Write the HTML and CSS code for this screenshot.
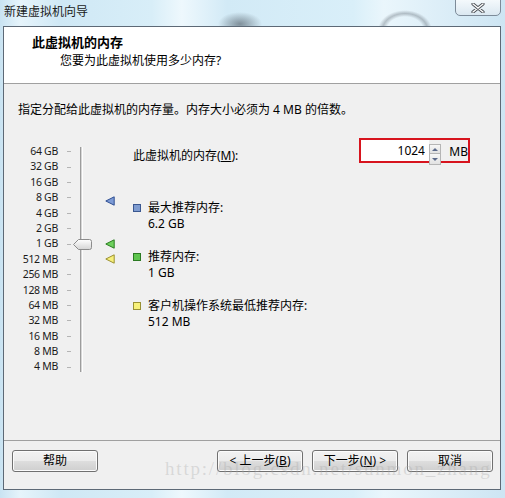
FILE: index.html
```html
<!DOCTYPE html>
<html lang="zh-CN">
<head>
    <meta charset="UTF-8">
    <title>新建虚拟机向导</title>
    <link rel="stylesheet" href="styles.css">
</head>
<body>
<div class="window">
    <div class="titlebar">
        <span class="title">新建虚拟机向导</span>
        <button class="close" title="关闭">
            <svg width="14" height="10" viewBox="0 0 14 10">
                <path d="M2 1 L12 9 M12 1 L2 9" stroke="#4a4f55" stroke-width="3.2" stroke-linecap="round"/>
                <path d="M2 1 L12 9 M12 1 L2 9" stroke="#ffffff" stroke-width="1.4" stroke-linecap="round"/>
            </svg>
        </button>
    </div>

    <div class="client">
        <!-- wizard header -->
        <div class="header">
            <h1>此虚拟机的内存</h1>
            <p>您要为此虚拟机使用多少内存?</p>
        </div>

        <div class="content">
            <p class="intro">指定分配给此虚拟机的内存量。内存大小必须为 4 MB 的倍数。</p>

            <div class="main">
                <div class="scale">
                    <span class="lbl">64 GB</span>
                    <span class="lbl">32 GB</span>
                    <span class="lbl">16 GB</span>
                    <span class="lbl">8 GB</span>
                    <span class="lbl">4 GB</span>
                    <span class="lbl">2 GB</span>
                    <span class="lbl">1 GB</span>
                    <span class="lbl">512 MB</span>
                    <span class="lbl">256 MB</span>
                    <span class="lbl">128 MB</span>
                    <span class="lbl">64 MB</span>
                    <span class="lbl">32 MB</span>
                    <span class="lbl">16 MB</span>
                    <span class="lbl">8 MB</span>
                    <span class="lbl">4 MB</span>

                    <div class="ticks">
                        <i></i><i></i><i></i><i></i><i></i><i></i><i></i><i></i>
                        <i></i><i></i><i></i><i></i><i></i><i></i><i></i>
                    </div>
                    <div class="track"></div>
                    <svg class="thumb" width="19" height="11" viewBox="0 0 19 11">
                        <defs>
                            <linearGradient id="tg" x1="0" y1="0" x2="0" y2="1">
                                <stop offset="0" stop-color="#ffffff"/>
                                <stop offset="1" stop-color="#d4d4d4"/>
                            </linearGradient>
                        </defs>
                        <path d="M0.5 5.5 L5.5 0.5 H16.5 Q18.5 0.5 18.5 2.5 V8.5 Q18.5 10.5 16.5 10.5 H5.5 Z" fill="url(#tg)" stroke="#8c8c8c"/>
                    </svg>
                    <svg class="marker max" width="10" height="10" viewBox="0 0 10 10">
                        <path d="M0.8 5 L9.2 0.8 V9.2 Z" fill="#7d9bd6" stroke="#2f4f92" stroke-linejoin="round"/>
                    </svg>
                    <svg class="marker rec" width="10" height="10" viewBox="0 0 10 10">
                        <path d="M0.8 5 L9.2 0.8 V9.2 Z" fill="#6fd15e" stroke="#2a7d20" stroke-linejoin="round"/>
                    </svg>
                    <svg class="marker min" width="10" height="10" viewBox="0 0 10 10">
                        <path d="M0.8 5 L9.2 0.8 V9.2 Z" fill="#f7f07a" stroke="#9a9030" stroke-linejoin="round"/>
                    </svg>
                </div>

                <div class="panel">
                    <div class="memrow">
                        <label for="memSize">此虚拟机的内存(<u>M</u>):</label>
                        <div class="membox">
                            <input type="text" id="memSize" value="1024">
                            <div class="spin">
                                <span class="up"></span>
                                <span class="down"></span>
                            </div>
                            <span class="unit">MB</span>
                        </div>
                    </div>

                    <div class="legend">
                        <div class="item">
                            <span class="swatch blue"></span>
                            <div>最大推荐内存:<br>6.2 GB</div>
                        </div>
                        <div class="item">
                            <span class="swatch green"></span>
                            <div>推荐内存:<br>1 GB</div>
                        </div>
                        <div class="item">
                            <span class="swatch yellow"></span>
                            <div>客户机操作系统最低推荐内存:<br>512 MB</div>
                        </div>
                    </div>
                </div>
            </div>
        </div>

        <div class="footer">
            <button class="btn help">帮助</button>
            <button class="btn">&lt; 上一步(<u>B</u>)</button>
            <button class="btn">下一步(<u>N</u>) &gt;</button>
            <button class="btn">取消</button>
            <span class="watermark">http://blog.csdn.net/sunmon_zhang</span>
        </div>
    </div>
</div>
</body>
</html>
```

FILE: styles.css
```css
body {
    margin: 0;
    font-family: "Noto Sans", "Noto Sans CJK SC", sans-serif;
    font-size: 12px;
    color: #000;
}
.window {
    width: 505px;
    height: 498px;
    box-sizing: border-box;
    padding: 0 4px 0 3px;
    display: flex;
    flex-direction: column;
    background:
        radial-gradient(ellipse 22px 12px at 240px 24px, rgba(60, 70, 80, 0.55), rgba(60, 70, 80, 0) 100%),
        radial-gradient(ellipse 30px 22px at 405px 30px, rgba(255, 255, 255, 0) 60%, rgba(80, 90, 100, 0.35) 75%, rgba(255, 255, 255, 0) 90%),
        linear-gradient(to right, #c9e3f2 0%, #e6f4fb 4%, #cfe8f5 12%, #d8eef8 30%, #eef8fd 36%, #d2eaf6 45%, #d9eff9 70%, #eaf6fc 76%, #cde5f3 100%);
}
.titlebar {
    height: 26px;
    display: flex;
    justify-content: space-between;
    align-items: flex-start;
}
.title {
    padding: 4px 0 0 1px;
    line-height: 16px;
    color: #1a1a1a;
}
.close {
    width: 46px;
    height: 17px;
    margin-top: -1px;
    padding: 0;
    border: 1px solid #7d8b99;
    border-radius: 0 0 5px 5px;
    background: linear-gradient(#f4f9fc, #dbe8f1);
    display: flex;
    align-items: center;
    justify-content: center;
}
.client {
    height: 464px;
    box-sizing: border-box;
    border: 1px solid #5d6976;
    background: #f0f0f0;
    display: flex;
    flex-direction: column;
}
.header {
    height: 50px;
    background: #fff;
    border-bottom: 1px solid #a0a0a0;
    padding-top: 6px;
}
.header h1 {
    margin: 0;
    padding-left: 28px;
    font-size: 13px;
    font-weight: bold;
    line-height: 18px;
}
.header p {
    margin: 2px 0 0;
    padding-left: 56px;
    line-height: 16px;
}
.content {
    flex: 1;
    padding: 18px 0 0 14px;
}
.intro {
    margin: 0;
    line-height: 16px;
}
.main {
    display: flex;
    margin-top: 20px;
}
.scale {
    display: grid;
    grid-template-columns: 40px 9px 4px 9px 3px 22px 9px;
    grid-template-rows: repeat(15, 15.4px);
    padding-top: 6px;
}
.lbl {
    grid-column: 1;
    text-align: right;
    font-size: 10.5px;
    letter-spacing: -0.3px;
    line-height: 15.4px;
    color: #1a1a1a;
}
.ticks {
    grid-column: 3;
    grid-row: 1 / -1;
    display: flex;
    flex-direction: column;
}
.ticks i {
    height: 15.4px;
    display: flex;
    align-items: center;
}
.ticks i::before {
    content: "";
    width: 4px;
    height: 1px;
    background: #b4b4b4;
}
.track {
    grid-column: 5;
    grid-row: 1 / -1;
    margin: 3px 0;
    border-left: 1px solid #9c9c9c;
    border-right: 1px solid #fdfdfd;
    background: #d6d6d6;
}
.thumb {
    grid-column: 4 / 7;
    grid-row: 7;
    align-self: center;
    margin-left: 2px;
}
.marker {
    grid-column: 7;
    align-self: center;
}
.marker.max {
    grid-row: 4;
    align-self: end;
}
.marker.rec {
    grid-row: 7;
}
.marker.min {
    grid-row: 8;
}
.panel {
    flex: 1;
    margin-left: 19px;
    padding-right: 30px;
}
.memrow {
    display: flex;
    align-items: center;
    height: 25px;
}
.memrow label {
    padding-top: 9px;
}
.membox {
    margin-left: auto;
    width: 111px;
    height: 25px;
    box-sizing: border-box;
    border: 2px solid #d7141e;
    display: flex;
    align-items: flex-start;
}
.membox input {
    width: 68px;
    height: 21px;
    box-sizing: border-box;
    border: none;
    padding: 0 4px 0 0;
    text-align: right;
    font: inherit;
    line-height: 21px;
    background: #fff;
}
.spin {
    width: 16px;
    display: flex;
    flex-direction: column;
    margin-top: 4px;
}
.spin span {
    height: 8px;
    border: 1px solid #b5b5b5;
    background: linear-gradient(#f7f7f7, #e2e2e2);
    display: flex;
    align-items: center;
    justify-content: center;
}
.spin .down {
    height: 10px;
    border-top: none;
}
.spin .up::before {
    content: "";
    border: 3px solid transparent;
    border-bottom: 3px solid #5c6a8a;
    border-top: none;
}
.spin .down::before {
    content: "";
    border: 3px solid transparent;
    border-top: 3px solid #5c6a8a;
    border-bottom: none;
}
.unit {
    margin: 5px 0 0 8px;
    line-height: 14px;
}
.legend {
    margin-top: 37px;
}
.item {
    display: flex;
    gap: 7px;
    line-height: 15.5px;
}
.item + .item {
    margin-top: 18px;
}
.swatch {
    width: 8px;
    height: 8px;
    box-sizing: border-box;
    margin-top: 4px;
    flex: none;
}
.swatch.blue {
    background: #7f9cd0;
    border: 1px solid #3a5790;
}
.swatch.green {
    background: #5ec54e;
    border: 1px solid #2b7a22;
}
.swatch.yellow {
    background: #f7f17a;
    border: 1px solid #989034;
}
.footer {
    position: relative;
    height: 39px;
    border-top: 1px solid #a0a0a0;
    padding: 9px 7px 0 8px;
    display: flex;
    align-items: flex-start;
    gap: 9px;
    overflow: hidden;
}
.btn {
    width: 86px;
    height: 22px;
    padding: 0;
    border: 1px solid #707070;
    border-radius: 3px;
    background: linear-gradient(#f2f2f2 0%, #ebebeb 48%, #dddddd 52%, #cfcfcf 100%);
    box-shadow: inset 0 0 0 1px #fbfbfb;
    font: inherit;
    line-height: 18px;
    color: #000;
}
.btn.help {
    margin-right: auto;
}
.watermark {
    position: absolute;
    left: 161px;
    top: 18px;
    font-family: "Liberation Serif", serif;
    font-size: 19px;
    line-height: 19px;
    letter-spacing: 1.8px;
    color: rgba(170, 170, 170, 0.35);
    pointer-events: none;
    white-space: nowrap;
}
```
